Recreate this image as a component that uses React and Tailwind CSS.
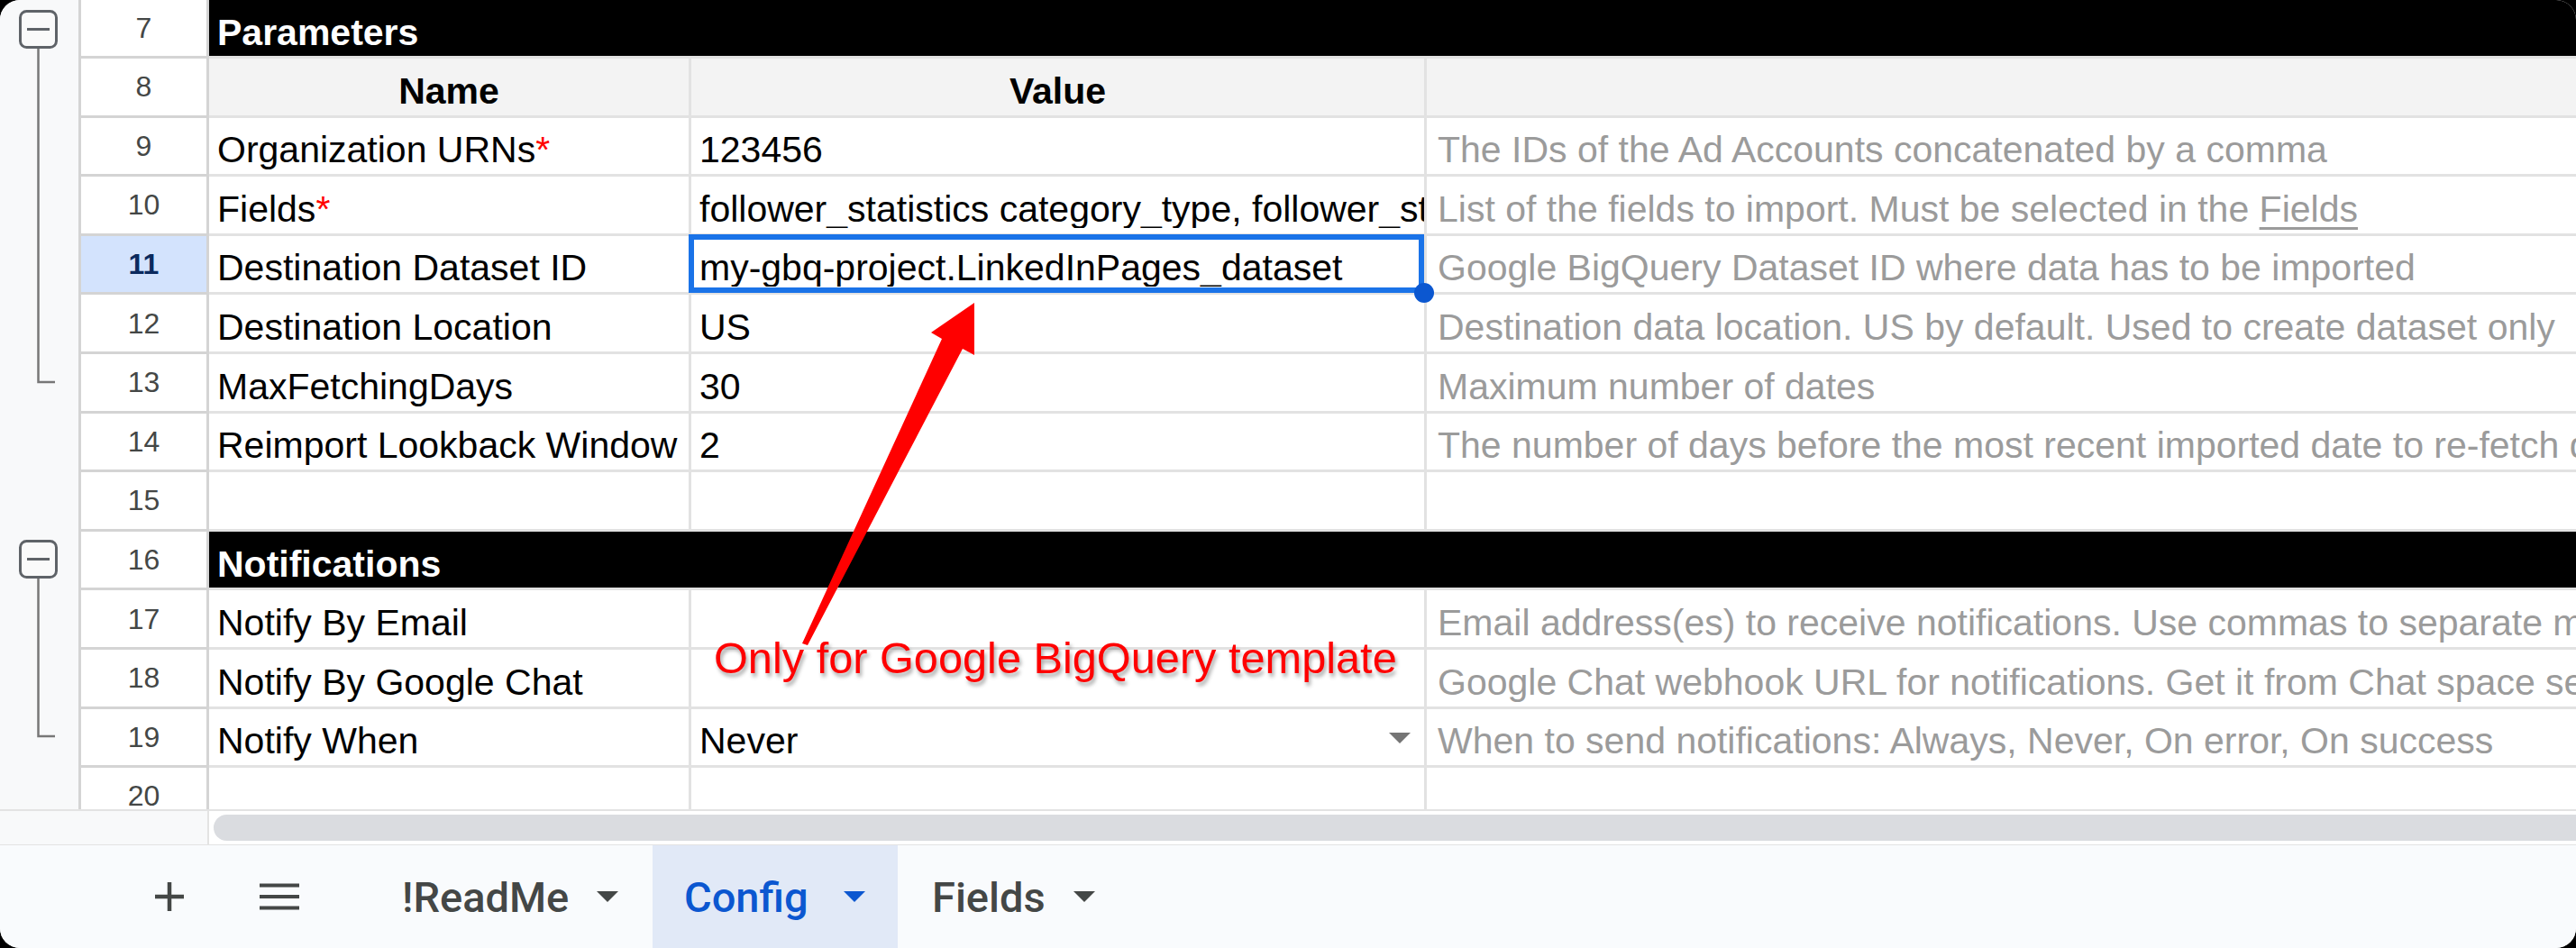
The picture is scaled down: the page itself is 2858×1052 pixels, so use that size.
import React from "react";

function RowHeader({ num, selected }) {
  return (
    <div
      className={`w-[142px] shrink-0 border-r-[3px] border-b-[3px] border-[#d4d4d4] flex items-center justify-center text-[32px] leading-none ${
        selected ? "bg-[#d3e3fd] text-[#0b2a5e] font-bold" : "bg-white text-[#444746]"
      }`}
    >
      {num}
    </div>
  );
}

function Row({ num, first, selected, children }) {
  return (
    <div className={`flex shrink-0 ${first ? "h-[65px]" : "h-[65.6px]"}`}>
      <RowHeader num={num} selected={selected} />
      {children}
    </div>
  );
}

function SectionRow({ num, first, title }) {
  return (
    <Row num={num} first={first}>
      <div className="flex-1 min-w-0 bg-black border-b-[3px] border-[#e2e2e2] flex items-end pb-[5px] pl-[9px] text-white font-bold text-[41px] leading-none whitespace-nowrap">
        {title}
      </div>
    </Row>
  );
}

function Caret({ color = "#444746", className = "" }) {
  return (
    <svg width="24" height="12" viewBox="0 0 24 12" className={className}>
      <path d="M0 0 L24 0 L12 12 Z" fill={color} />
    </svg>
  );
}

function DataRow({ num, name, required, value, desc, selected, dropdown, header }) {
  const base = "border-b-[3px] border-[#e2e2e2] flex items-end pb-[6px] text-[41px] leading-none whitespace-nowrap overflow-hidden";
  if (header) {
    return (
      <Row num={num}>
        <div className={`w-[535px] shrink-0 border-r-[3px] bg-[#f3f3f3] justify-center font-bold text-black ${base}`}>Name</div>
        <div className={`w-[816px] shrink-0 border-r-[3px] bg-[#f3f3f3] justify-center font-bold text-black ${base}`}>Value</div>
        <div className={`flex-1 min-w-0 bg-[#f3f3f3] ${base}`}></div>
      </Row>
    );
  }
  return (
    <Row num={num} selected={selected}>
      <div className={`w-[535px] shrink-0 border-r-[3px] bg-white pl-[9px] text-black ${base}`}>
        {name}
        {required && <span className="text-[#ff0000]">*</span>}
      </div>
      <div className={`relative w-[816px] shrink-0 border-r-[3px] bg-white pl-[9px] text-black ${base} !overflow-visible`}>
        <span className="block overflow-hidden w-full">{value}</span>
        {dropdown && (
          <div className="absolute right-[15px] top-[26px]">
            <Caret color="#757575" />
          </div>
        )}
        {selected && (
          <>
            <div className="absolute left-[-3px] top-[-2px] right-[0px] bottom-[-1px] border-[6px] border-[#1a73e8]" />
            <div className="absolute right-[-11px] bottom-[-12px] w-[22px] h-[22px] rounded-full bg-[#0b57d0] z-10" />
          </>
        )}
      </div>
      <div className={`flex-1 min-w-0 bg-white pl-[12px] text-[#9b9b9b] !overflow-visible ${base}`}>{desc}</div>
    </Row>
  );
}

function Gutter() {
  return (
    <div className="w-[90px] shrink-0 bg-[#f8f9fa] border-r-[3px] border-[#d4d4d4]">
      <svg width="87" height="898" viewBox="0 0 87 898">
        <g stroke="#5f6368" fill="none">
          <rect x="22.5" y="12.5" width="40" height="40" rx="7" strokeWidth="3" fill="#fafafa" />
          <line x1="30" y1="32.5" x2="55" y2="32.5" strokeWidth="3" />
          <path d="M42.5 54 L42.5 424 L61 424" strokeWidth="2.5" stroke="#777" />
          <rect x="22.5" y="600.5" width="40" height="40" rx="7" strokeWidth="3" fill="#fafafa" />
          <line x1="30" y1="620.5" x2="55" y2="620.5" strokeWidth="3" />
          <path d="M42.5 642 L42.5 817 L61 817" strokeWidth="2.5" stroke="#777" />
        </g>
      </svg>
    </div>
  );
}

function Plus() {
  return (
    <svg width="34" height="34" viewBox="0 0 34 34">
      <path d="M17 1 V33 M1 17 H33" stroke="#444746" strokeWidth="4.5" />
    </svg>
  );
}

function Menu() {
  return (
    <svg width="44" height="30" viewBox="0 0 44 30">
      <path d="M0 2.5 H44 M0 15 H44 M0 27.5 H44" stroke="#444746" strokeWidth="4" />
    </svg>
  );
}

export default function App() {
  return (
    <div className="w-[2858px] h-[1052px] bg-black overflow-hidden font-['Liberation_Sans',Arial,sans-serif]">
      <div className="relative w-full h-full bg-white rounded-[22px] overflow-hidden flex flex-col">
        {/* grid */}
        <div className="h-[898px] shrink-0 flex overflow-hidden">
          <Gutter />
          <div className="flex-1 min-w-0 flex flex-col">
            <SectionRow num={7} first title="Parameters" />
            <DataRow num={8} header />
            <DataRow num={9} name="Organization URNs" required value="123456" desc="The IDs of the Ad Accounts concatenated by a comma" />
            <DataRow
              num={10}
              name="Fields"
              required
              value="follower_statistics category_type, follower_statistics function"
              desc={
                <span>
                  List of the fields to import. Must be selected in the{" "}
                  <span className="underline decoration-[3px] underline-offset-[6px]">Fields</span>
                </span>
              }
            />
            <DataRow
              num={11}
              selected
              name="Destination Dataset ID"
              value="my-gbq-project.LinkedInPages_dataset"
              desc="Google BigQuery Dataset ID where data has to be imported"
            />
            <DataRow num={12} name="Destination Location" value="US" desc="Destination data location. US by default. Used to create dataset only" />
            <DataRow num={13} name="MaxFetchingDays" value="30" desc="Maximum number of dates" />
            <DataRow
              num={14}
              name="Reimport Lookback Window"
              value="2"
              desc="The number of days before the most recent imported date to re-fetch data"
            />
            <DataRow num={15} name="" value="" desc="" />
            <SectionRow num={16} title="Notifications" />
            <DataRow
              num={17}
              name="Notify By Email"
              value=""
              desc="Email address(es) to receive notifications. Use commas to separate multiple emails"
            />
            <DataRow
              num={18}
              name="Notify By Google Chat"
              value=""
              desc="Google Chat webhook URL for notifications. Get it from Chat space settings"
            />
            <DataRow
              num={19}
              name="Notify When"
              value="Never"
              dropdown
              desc="When to send notifications: Always, Never, On error, On success"
            />
            <DataRow num={20} name="" value="" desc="" />
          </div>
        </div>

        {/* horizontal scrollbar */}
        <div className="h-[40px] shrink-0 flex border-t-[2px] border-b-[1px] border-[#e3e3e3]">
          <div className="w-[232px] shrink-0 bg-[#f8f9fa] border-r-[2px] border-[#e3e3e3]" />
          <div className="flex-1 bg-white pl-[5px] py-[4px]">
            <div className="h-full bg-[#dadce0] rounded-l-full" />
          </div>
        </div>

        {/* sheet tabs */}
        <div className="flex-1 flex items-stretch bg-[#f9fbfd] font-['Roboto',sans-serif] font-medium text-[47px] leading-none text-[#444746]">
          <div className="flex items-center pl-[171px]">
            <Plus />
          </div>
          <div className="flex items-center pl-[83px]">
            <Menu />
          </div>
          <div className="flex items-center justify-between w-[314px] ml-[78px] pl-[36px] pr-[38px]">
            <span>!ReadMe</span>
            <Caret />
          </div>
          <div className="flex items-center justify-between w-[272px] bg-[#e1e9f7] pl-[35px] pr-[36px] text-[#0b57d0]">
            <span>Config</span>
            <Caret color="#0b57d0" />
          </div>
          <div className="flex items-center justify-between w-[255px] pl-[38px] pr-[36px]">
            <span>Fields</span>
            <Caret />
          </div>
        </div>

        {/* annotation overlay */}
        <svg className="absolute left-0 top-0 pointer-events-none" width="2858" height="1052" viewBox="0 0 2858 1052">
          <polygon
            points="1081,336 1081,394 1068,387 896,716 890,714 1045,376 1033,369"
            fill="#ff0000"
          />
        </svg>
        <div className="absolute left-[792px] top-[706px] text-[48.7px] leading-none text-[#ff0000] whitespace-nowrap [text-shadow:2px_4px_4px_rgba(0,0,0,0.35)]">
          Only for Google BigQuery template
        </div>
      </div>
    </div>
  );
}
